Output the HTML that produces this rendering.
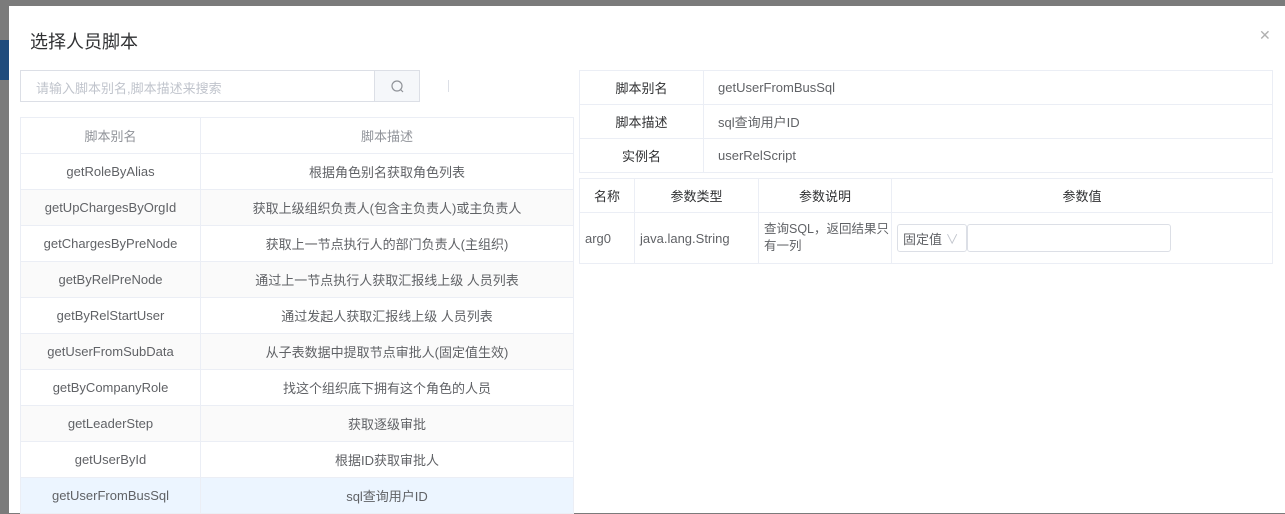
<!DOCTYPE html>
<html><head><meta charset="utf-8"><style>
*{box-sizing:border-box;margin:0;padding:0}
body{width:1285px;height:513px;overflow:hidden;background:#7b7b7b;font-family:"Liberation Sans","Noto Sans CJK SC",sans-serif;font-size:13px;color:#606266;position:relative}
.blue{position:absolute;left:0;top:40px;width:9px;height:40px;background:#1f4b7c}
.dlg{position:absolute;left:9px;top:6px;width:1276px;height:507px;background:#fff}
.title{position:absolute;left:21px;top:22px;font-size:18px;color:#303133}
.close{position:absolute;left:1250px;top:21px;font-size:14px;color:#b0b0b0}
.search{position:absolute;left:11px;top:64px;width:355px;height:32px;border:1px solid #dcdfe6;border-right:none;color:#c0c4cc;padding:7px 15px;font-size:13px}
.btn{position:absolute;left:365px;top:64px;width:46px;height:32px;border:1px solid #dcdfe6;background:#f5f7fa}
.sep{position:absolute;left:439px;top:74px;width:1px;height:12px;background:#dcdfe6}
table{border-collapse:collapse;position:absolute}
td{border:1px solid #ebeef5;text-align:center}
.lt{left:11px;top:111px;width:554px}
.lt td{height:36px}
.lt tr.h td{color:#909399}
.lt tr.s td{background:#fafafa}
.lt tr.sel td{background:#ecf5ff}
.r1{left:570px;top:64px;width:694px}
.r1 td{height:34px}
.r1 td.v{text-align:left;padding-left:14px}
.r1 td.l{color:#303133;width:124px}
.r2{left:570px;top:172px;width:694px}
.r2 td{height:34px}
.r2 tr.h td{color:#303133}
.r2 tr.d td{height:51px;text-align:left;padding-left:5px;line-height:17px}
.sel2{display:inline-block;width:70px;height:28px;border:1px solid #dcdfe6;border-radius:3px;vertical-align:middle;padding:6px 5px;color:#606266}
.inp{display:inline-block;width:204px;height:28px;border:1px solid #dcdfe6;border-radius:3px;vertical-align:middle;margin-left:0}
</style></head><body>
<div class="blue"></div>
<div class="dlg">
<div class="title">选择人员脚本</div>
<div class="close">✕</div>
<div class="search">请输入脚本别名,脚本描述来搜索</div>
<div class="btn"><svg width="46" height="30"><circle cx="22" cy="15" r="5" fill="none" stroke="#909399" stroke-width="1.2"/><line x1="25.5" y1="18.5" x2="28" y2="21" stroke="#909399" stroke-width="1.2"/></svg></div>
<div class="sep"></div>
<table class="lt">
<tr class="h"><td style="width:180px">脚本别名</td><td>脚本描述</td></tr>
<tr><td>getRoleByAlias</td><td>根据角色别名获取角色列表</td></tr>
<tr class="s"><td>getUpChargesByOrgId</td><td>获取上级组织负责人(包含主负责人)或主负责人</td></tr>
<tr><td>getChargesByPreNode</td><td>获取上一节点执行人的部门负责人(主组织)</td></tr>
<tr class="s"><td>getByRelPreNode</td><td>通过上一节点执行人获取汇报线上级 人员列表</td></tr>
<tr><td>getByRelStartUser</td><td>通过发起人获取汇报线上级 人员列表</td></tr>
<tr class="s"><td>getUserFromSubData</td><td>从子表数据中提取节点审批人(固定值生效)</td></tr>
<tr><td>getByCompanyRole</td><td>找这个组织底下拥有这个角色的人员</td></tr>
<tr class="s"><td>getLeaderStep</td><td>获取逐级审批</td></tr>
<tr><td>getUserById</td><td>根据ID获取审批人</td></tr>
<tr class="sel"><td>getUserFromBusSql</td><td>sql查询用户ID</td></tr>
</table>
<table class="r1">
<tr><td class="l">脚本别名</td><td class="v">getUserFromBusSql</td></tr>
<tr><td class="l">脚本描述</td><td class="v">sql查询用户ID</td></tr>
<tr><td class="l">实例名</td><td class="v">userRelScript</td></tr>
</table>
<table class="r2">
<tr class="h"><td style="width:55px">名称</td><td style="width:124px">参数类型</td><td style="width:133px">参数说明</td><td>参数值</td></tr>
<tr class="d"><td>arg0</td><td>java.lang.String</td><td style="white-space:nowrap;font-size:12.5px">查询SQL，返回结果只<br>有一列</td><td><span class="sel2">固定值 <span style="color:#c0c4cc">∨</span></span><span class="inp"></span></td></tr>
</table>
</div>
</body></html>
